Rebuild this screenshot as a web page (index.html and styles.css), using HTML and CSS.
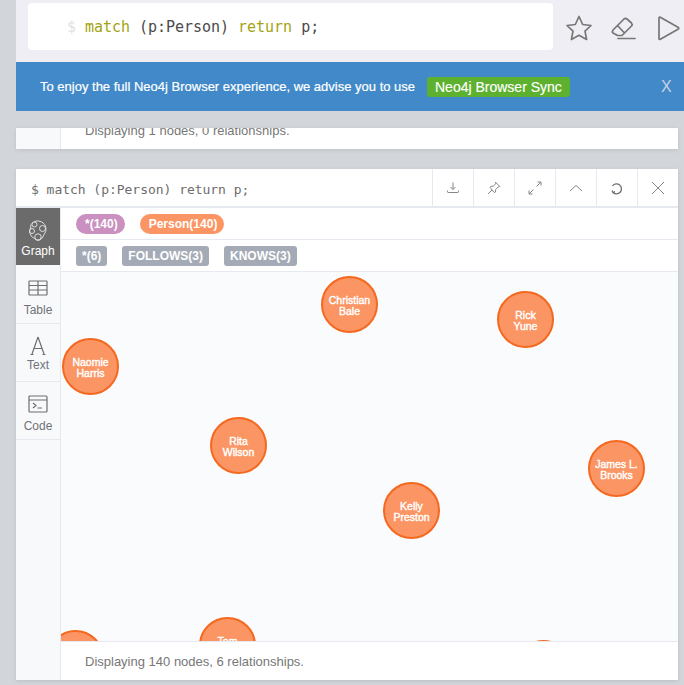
FILE: index.html
```html
<!DOCTYPE html>
<html lang="en">
<head>
<meta charset="utf-8">
<title>Neo4j Browser</title>
<link rel="stylesheet" href="styles.css">
</head>
<body>
<main class="stream">
  <section class="editor">
    <div class="editor-input"><span class="prompt">$</span> <span class="kw">match</span> <span class="plain">(p:Person)</span> <span class="kw">return</span> <span class="plain">p;</span></div>
    <div class="editor-actions">
      <svg width="28" height="28" viewBox="0 0 28 28"><path d="M14 1.500l3.700 8 8.300 1-6 5.700 1.600 8.300-7.600-4.200-7.600 4.200 1.600-8.300-6-5.700 8.300-1z"/></svg>
      <svg width="28" height="28" viewBox="0 0 28 28"><path d="M3 15L14 4q1.500-1.300 3 0l4.500 4q1.300 1.500 0 3L12 20.500H7.500L3 18q-1.200-1.500 0-3zM7.500 10.500l7 7.500M8 23.500h17"/></svg>
      <svg width="26" height="28" viewBox="0 0 26 28"><path d="M4 3q0-1.300 1.300-.8L23 12.200q1.500 1 0 2L5.300 24.300q-1.300.5-1.300-.8z"/></svg>
    </div>
  </section>
  <section class="banner">
    <span class="banner-text">To enjoy the full Neo4j Browser experience, we advise you to use</span>
    <a class="sync">Neo4j Browser Sync</a>
    <span class="banner-close">X</span>
  </section>

  <section class="card card-old">
    <div class="rail"></div>
    <div class="old-status"><span>Displaying 1 nodes, 0 relationships.</span></div>
  </section>

  <section class="card card-result">
    <header class="frame-head">
      <code class="frame-query">$ match (p:Person) return p;</code>
      <div class="frame-btn"><svg width="14" height="14" viewBox="0 0 14 14"><path d="M7 1.500v7M4.500 6L7 8.500 9.500 6M1.500 9.500v1.300q0 .7.7.7h9.600q.7 0 .7-.7V9.500"/></svg></div>
      <div class="frame-btn"><svg width="14" height="14" viewBox="0 0 14 14"><path d="M8.500 1.200l4.300 4.300-1.500.4-2.700 2.700-.1 2.400-1 .8L3 6.300l.8-1 2.400-.1 2.700-2.700zM5 9L1 13"/></svg></div>
      <div class="frame-btn"><svg width="14" height="14" viewBox="0 0 14 14"><path d="M8.500 5.500L13 1M9.500 1H13v3.500M5.500 8.500L1 13M4.500 13H1V9.500"/></svg></div>
      <div class="frame-btn"><svg width="14" height="14" viewBox="0 0 14 14"><path d="M1 10l6-5.500L13 10"/></svg></div>
      <div class="frame-btn"><svg class="icon-refresh" width="14" height="14" viewBox="0 0 14 14"><path d="M3 11.500A5 5 0 1 0 2.500 4.800M2 9.500l1 2.200 2-1"/></svg></div>
      <div class="frame-btn"><svg width="14" height="14" viewBox="0 0 14 14"><path d="M1 1l12 12M13 1L1 13"/></svg></div>
    </header>
    <div class="frame-body">
      <nav class="tabs">
        <div class="tab tab-active">
          <svg width="20" height="22" viewBox="0 0 20 22"><path d="M6 1.500q4-1.500 8 .5 3.500 2 4 6 .5 4-2 6.500-1 4-4.500 5.500-3.500 1-5-1.500-3.500-1.500-4.500-5-1-3 .5-5.500Q2 4 6 1.500z"/><circle cx="6.500" cy="4.500" r="2.500"/><circle cx="14.500" cy="8.500" r="3"/><circle cx="4" cy="11" r="2.500"/><circle cx="10" cy="17" r="3.200"/></svg>
          <span>Graph</span>
        </div>
        <div class="tab tab-table">
          <svg width="20" height="16" viewBox="0 0 20 16"><path d="M1.500 1h17q.5 0 .5.500v13q0 .5-.5.500h-17q-.5 0-.5-.500v-13q0-.5.500-.5zM1 5.500h18M1 10h18M10 1v14"/></svg>
          <span>Table</span>
        </div>
        <div class="tab tab-text">
          <svg width="16" height="20" viewBox="0 0 16 20"><path d="M8 1L2 18M8 1l6 17M4 12.500h8M.5 18.500h3M12.500 18.500h3"/></svg>
          <span>Text</span>
        </div>
        <div class="tab tab-code">
          <svg width="20" height="18" viewBox="0 0 20 18"><path d="M2 1h16q1 0 1 1v14q0 1-1 1H2q-1 0-1-1V2q0-1 1-1zM1 5h18M5 8l3 2.500L5 13M9.500 13H14"/></svg>
          <span>Code</span>
        </div>
      </nav>
      <div class="result">
        <div class="legend">
          <span class="pill pill-all">*(140)</span>
          <span class="pill pill-person">Person(140)</span>
        </div>
        <div class="legend">
          <span class="tag">*(6)</span>
          <span class="tag">FOLLOWS(3)</span>
          <span class="tag">KNOWS(3)</span>
        </div>
        <div class="canvas">
          <div class="node n1">Christian<br>Bale</div>
          <div class="node n2">Rick<br>Yune</div>
          <div class="node n3">Naomie<br>Harris</div>
          <div class="node n4">Rita<br>Wilson</div>
          <div class="node n5">James L.<br>Brooks</div>
          <div class="node n6">Kelly<br>Preston</div>
          <div class="node n7"></div>
          <div class="node n8">Tom<br>Hanks</div>
          <div class="node n9"></div>
        </div>
        <footer class="status">Displaying 140 nodes, 6 relationships.</footer>
      </div>
    </div>
  </section>
</main>
</body>
</html>
```

FILE: styles.css
```css
* { box-sizing: border-box; }
html, body { margin: 0; padding: 0; height: 100%; overflow: hidden; }
body { background: #d2d5da; font-family: "Liberation Sans", Arial, sans-serif; color: #6b6b6b; }
.stream { margin-left: 16px; display: flex; flex-direction: column; }

.editor { height: 62px; background: #eeeef4; display: flex; padding: 3px 0 0 12px; }
.editor-input { width: 525px; height: 47px; background: #fff; border-radius: 4px; padding-left: 39px; font: 15px/49px "DejaVu Sans Mono", monospace; letter-spacing: -.03px; white-space: pre; }
.prompt { color: #dfe1e5; }
.kw { color: #a3a312; }
.plain { color: #4a4a4a; }
.editor-actions { display: flex; gap: 17px; margin-left: 12px; height: 52px; align-items: center; }
.editor-actions svg { fill: none; stroke: #777; stroke-width: 1.700; stroke-linejoin: round; stroke-linecap: round; }

.banner { height: 49px; background: #4189c9; color: #fff; display: flex; align-items: center; padding-left: 24px; }
.banner-text { width: 387px; font-size: 13px; -webkit-text-stroke: .2px #fff; white-space: nowrap; }
.sync { width: 143px; height: 20px; background: #5db12f; border-radius: 3px; padding-left: 8px; font-size: 14px; -webkit-text-stroke: .15px #fff; line-height: 20px; white-space: nowrap; }
.banner-close { margin-left: 91px; font-size: 16px; color: #c6d3e2; }

.card { width: 662px; background: #fff; box-shadow: 0 1px 4px rgba(0, 0, 0, .1); }
.card-old { margin-top: 17px; height: 21px; display: flex; overflow: hidden; }
.rail { width: 45px; background: #f7f9fb; border-right: 1px solid #e6e9ef; }
.old-status { padding-left: 24px; font-size: 13px; line-height: 16px; color: #777; }
.old-status span { display: block; margin-top: -5px; }

.card-result { margin-top: 20px; height: 511px; display: flex; flex-direction: column; }
.frame-head { height: 39px; display: flex; align-items: stretch; border-bottom: 2px solid #e6e9ef; }
.frame-query { flex: 1; padding-left: 15px; font: 13px/41px "DejaVu Sans Mono", monospace; letter-spacing: -.03px; color: #6d6d6d; }
.frame-btn { width: 41px; border-left: 1px solid #e6e9ef; display: flex; align-items: center; justify-content: center; }
.frame-btn svg { fill: none; stroke: #868686; stroke-width: 1; }
.frame-btn .icon-refresh { stroke: #6f6f6f; stroke-width: 1.300; }

.frame-body { flex: 1; display: flex; min-height: 0; }
.tabs { width: 45px; background: #f7f9fb; border-right: 1px solid #e6e9ef; flex: none; }
.tab { height: 58px; display: flex; flex-direction: column; align-items: center; justify-content: flex-end; border-bottom: 1px solid #e6e9ef; font-size: 12px; color: #717378; }
.tab svg { fill: none; stroke: #6e6e6e; stroke-width: 1.200; }
.tab-active { height: 57px; gap: 2px; padding-bottom: 7px; background: #6b6b6b; color: #fff; border-bottom: 0; }
.tab-active svg { stroke: #ddd; stroke-width: 1; }
.tab-table { height: 59px; gap: 7px; padding-bottom: 6px; }
.tab-text { gap: 2px; padding-bottom: 9px; }
.tab-code { gap: 6px; padding-bottom: 6px; }

.result { flex: 1; min-width: 0; display: flex; flex-direction: column; }
.legend { height: 32px; flex: none; display: flex; align-items: center; gap: 15px; padding-left: 15px; border-bottom: 1px solid #e6e9ef; }
.pill, .tag { height: 20px; font-size: 12px; font-weight: bold; line-height: 20px; color: #fff; white-space: nowrap; }
.pill { padding: 0 7px 0 9px; border-radius: 10px; }
.pill-all { background: #c990c0; }
.pill-person { background: #fb9564; }
.tag { padding: 0 6px; border-radius: 3px; background: #a5abb6; }

.canvas { flex: 1; min-height: 0; position: relative; overflow: hidden; background: #fafbfd; }
.node { position: absolute; width: 57px; height: 57px; padding-top: 3px; border-radius: 50%; background: #fb9564; border: 2px solid #f4691f; color: #fff; font-size: 10.500px; -webkit-text-stroke: .4px #fff; line-height: 11px; text-align: center; display: flex; align-items: center; justify-content: center; }
.n1 { left: 260px; top: 4px; }
.n2 { left: 436px; top: 19px; }
.n3 { left: 1px; top: 66px; }
.n4 { left: 149px; top: 145px; }
.n5 { left: 527px; top: 168px; }
.n6 { left: 322px; top: 210px; }
.n7 { left: -14px; top: 358px; }
.n8 { left: 138px; top: 345px; }
.n9 { left: 454px; top: 368px; }

.status { height: 39px; flex: none; border-top: 1px solid #e6e9ef; background: #fff; padding-left: 24px; font-size: 13px; line-height: 39px; color: #777; }
```
